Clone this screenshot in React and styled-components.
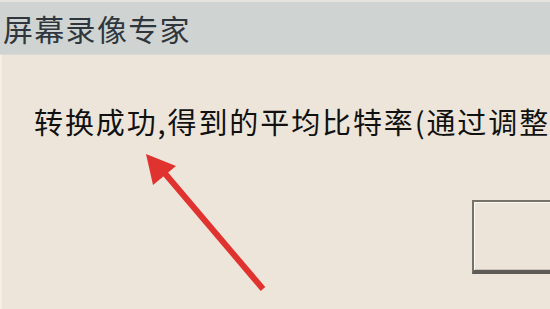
import React from "react";
import styled, { createGlobalStyle } from "styled-components";

const Global = createGlobalStyle`
  html, body { margin: 0; padding: 0; }
  body { width: 550px; height: 309px; overflow: hidden; background: #ede5da; }
  #root { width: 550px; height: 309px; }
`;

const Window = styled.div`
  position: relative;
  width: 550px;
  height: 309px;
  background: #ede5da;
  display: flex;
  flex-direction: column;
  overflow: hidden;
  font-family: "Noto Sans CJK SC", "Noto Sans", sans-serif;
`;

const TopEdge = styled.div`
  height: 2px;
  background: #e6e3dc;
`;

const TitleBar = styled.div`
  height: 52px;
  background: #cfd4d2;
  display: flex;
  align-items: center;
  padding-left: 3px;
  border-bottom: 1px solid #d9dcd6;
`;

const Title = styled.span`
  font-size: 30px;
  font-weight: 400;
  color: #2f363d;
  letter-spacing: 1.3px;
  line-height: 1;
`;

const Body = styled.div`
  flex: 1;
  display: flex;
  flex-direction: column;
  padding: 52px 0 0 32px;
  border-left: 2px solid #f4efe7;
`;

const Message = styled.div`
  font-size: 29px;
  font-weight: 400;
  color: #111111;
  white-space: nowrap;
  line-height: 1;
  letter-spacing: 1.9px;
`;

const ButtonRow = styled.div`
  display: flex;
  justify-content: flex-end;
  margin-top: 64px;
  margin-right: -44px;
`;

const Button = styled.div`
  width: 120px;
  height: 68px;
  background: #ece4d9;
  border-left: 2px solid #75716b;
  border-top: 2px solid #75716b;
  border-bottom: 4px solid #5f5b56;
  box-shadow: inset 1px 1px 0 #fbf8f2, inset 0 -1px 0 #c9c3ba;
`;

const ArrowSvg = styled.svg`
  position: absolute;
  left: 0;
  top: 0;
  pointer-events: none;
`;

export default function App() {
  return (
    <>
      <Global />
      <Window>
        <TopEdge />
        <TitleBar>
          <Title>屏幕录像专家</Title>
        </TitleBar>
        <Body>
          <Message>转换成功,得到的平均比特率(通过调整</Message>
          <ButtonRow>
            <Button />
          </ButtonRow>
        </Body>
        <ArrowSvg width="550" height="309" viewBox="0 0 550 309">
          <line x1="263" y1="289" x2="162" y2="170" stroke="#e0332f" strokeWidth="6" strokeLinecap="butt" />
          <polygon points="146,154 153,185 176,166" fill="#e0332f" />
        </ArrowSvg>
      </Window>
    </>
  );
}
